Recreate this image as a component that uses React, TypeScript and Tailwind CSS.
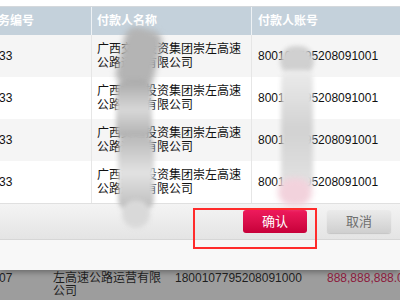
import React from "react";

const company = "广西交通投资集团崇左高速公路运营有限公司";
const rows = [
  { no: "33", name: company, account: "800107795208091001" },
  { no: "33", name: company, account: "800107795208091001" },
  { no: "33", name: company, account: "800107795208091001" },
  { no: "33", name: company, account: "800107795208091001" },
];

const font = { fontFamily: '"Liberation Sans", "Noto Sans CJK SC", sans-serif' };

export default function App() {
  return (
    <div className="relative w-[400px] h-[300px] overflow-hidden bg-[#9d9d9d] text-[12px]" style={font}>
      {/* dialog */}
      <div className="flex flex-col bg-white shadow-[0_2px_6px_rgba(0,0,0,0.35)]">
        <div className="h-[7px] border-b border-[#d4d8dc] bg-white" />

        {/* table head */}
        <div className="grid grid-cols-[92px_160px_1fr] h-[28px] bg-[#c4d1db] font-bold text-white text-[12px]">
          <div className="flex items-center border-r border-[#eef2f5] -ml-[2px]">务编号</div>
          <div className="flex items-center border-r border-[#eef2f5] pl-[5px]">付款人名称</div>
          <div className="flex items-center pl-[6px]">付款人账号</div>
        </div>

        {/* table body */}
        {rows.map((r, i) => (
          <div
            key={i}
            className={`grid grid-cols-[92px_160px_1fr] h-[42px] text-[#111] ${i % 2 === 0 ? "bg-[#f5f5f5]" : "bg-white"}`}
          >
            <div className="flex items-center border-r border-[#e6e6e6] -ml-[1px]">{r.no}</div>
            <div className="flex items-center border-r border-[#e6e6e6] px-[5px] leading-[14px]">{r.name}</div>
            <div className="flex items-center pl-[6px]">{r.account}</div>
          </div>
        ))}

        {/* footer */}
        <div className="flex h-[37px] items-center justify-end gap-[20px] border-t border-[#e0e0e0] border-b border-b-[#d6d6d6] bg-gradient-to-b from-[#f4f4f4] to-[#e4e4e4] pr-[9px]">
          <button className="h-[23px] w-[64px] rounded-[3px] bg-gradient-to-b from-[#ee1a5c] to-[#c70039] text-[13px] text-white">
            确认
          </button>
          <button className="h-[23px] w-[64px] rounded-[3px] bg-gradient-to-b from-[#ebebeb] to-[#cfcfcf] text-[13px] text-[#6f6f6f] shadow-[0_1px_1px_rgba(0,0,0,0.15)]">
            取消
          </button>
        </div>

        <div className="h-[30px] bg-[#f8f8f8]" />
      </div>

      {/* page behind the dialog */}
      <div className="grid grid-cols-[53px_122px_152px_1fr] pt-[2px] leading-[13px] text-[#1e1e1e]">
        <div className="-ml-[1px]">07</div>
        <div className="pr-[12px]">左高速公路运营有限公司</div>
        <div>1800107795208091000</div>
        <div className="whitespace-nowrap text-[#8b1a3c]">888,888,888.00</div>
      </div>

      {/* mosaic blur over the sensitive text */}
      <div className="pointer-events-none absolute left-[120px] top-[28px] h-[60px] w-[38px] rotate-[14deg] rounded-[12px] bg-[#b4b4b4] blur-[3px]" />
      <div className="pointer-events-none absolute left-[116px] top-[80px] h-[60px] w-[36px] rounded-[10px] bg-gradient-to-b from-[#a9a9a9] via-[#d8d8d8] to-[#acacac] blur-[2px]" />
      <div className="pointer-events-none absolute left-[118px] top-[135px] h-[75px] w-[36px] rounded-[10px] bg-gradient-to-b from-[#b8b8b8] via-[#e2e2e2] to-[#bdbdbd] blur-[2px]" />
      <div className="pointer-events-none absolute left-[122px] top-[200px] h-[28px] w-[28px] rounded-full bg-[#d9d9d9] blur-[2px]" />
      <div className="pointer-events-none absolute left-[280px] top-[46px] h-[30px] w-[34px] rounded-full bg-[#d0d0d0] blur-[2px]" />
      <div className="pointer-events-none absolute left-[281px] top-[70px] h-[120px] w-[32px] rounded-[8px] bg-gradient-to-b from-[#ececec] via-[#d2d2d2] to-[#e4e4e4] blur-[2px]" />
      <div className="pointer-events-none absolute left-[278px] top-[178px] h-[28px] w-[34px] rounded-full bg-[#f2d2dc] blur-[3px]" />

      {/* annotation box */}
      <div className="pointer-events-none absolute left-[193px] top-[208px] h-[41px] w-[124px] border-2 border-[#ff2b2b]" />
    </div>
  );
}
